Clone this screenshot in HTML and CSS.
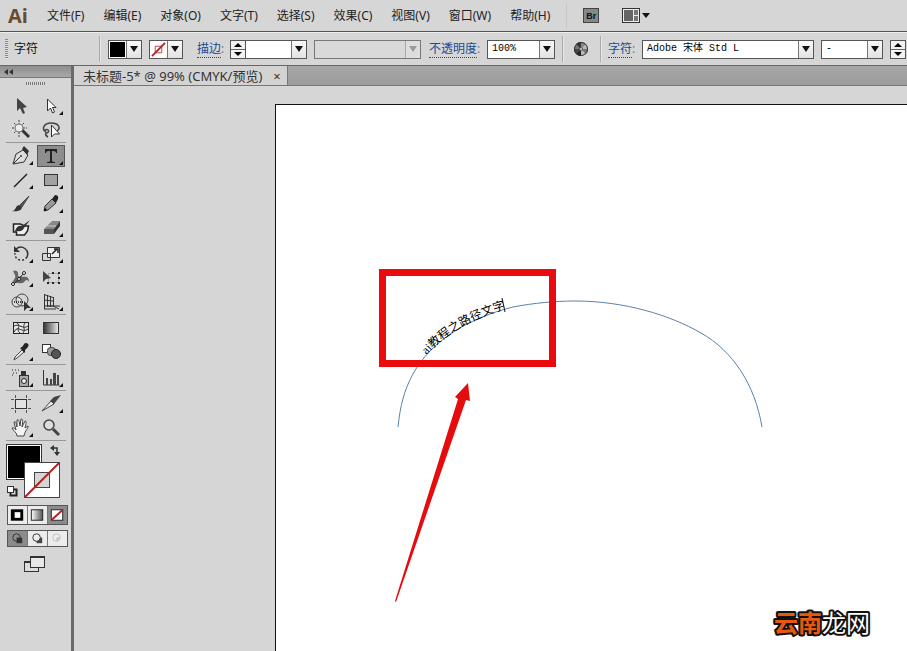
FILE: index.html
```html
<!DOCTYPE html>
<html lang="zh-CN">
<head>
<meta charset="utf-8">
<title>未标题-5</title>
<link rel="stylesheet" href="styles.css">
</head>
<body>
<header class="menubar">
  <div class="logo">Ai</div>
  <nav class="menus">
    <button>文件(F)</button><button>编辑(E)</button><button>对象(O)</button><button>文字(T)</button><button>选择(S)</button><button>效果(C)</button><button>视图(V)</button><button>窗口(W)</button><button>帮助(H)</button>
  </nav>
  <span class="menu-rule"></span>
  <button class="bridge" aria-label="Bridge">Br</button>
  <button class="arrange" aria-label="排列文档"><svg width="28" height="16" viewBox="0 0 28 16"><rect x=".5" y=".5" width="17" height="14" fill="#eee" stroke="#333"/><path d="M2 2h9v11H2z" fill="#666"/><path d="M12 2h4v5h-4zM12 8h4v5h-4z" fill="#777"/><path d="M20 5h8l-4 5z" fill="#111"/></svg></button>
</header>

<section class="controlbar">
  <span class="grip"></span>
  <span class="panel-name">字符</span>
  <span class="rule"></span>
  <button class="swatch" aria-label="填色"><span class="chip black"></span><span class="drop"><svg class="tri" viewBox="0 0 8 6"><path d="M0 0h8L4 6z"/></svg></span></button>
  <button class="swatch" aria-label="描边颜色"><span class="chip"><svg width="15" height="15" viewBox="0 0 16 16"><path d="M4.500 4.500h7v7h-7z" fill="none" stroke="#a44"/><path d="M1 15 15 1" stroke="#b32025" stroke-width="2"/></svg></span><span class="drop"><svg class="tri" viewBox="0 0 8 6"><path d="M0 0h8L4 6z"/></svg></span></button>
  <a class="panel-link stroke-link" href="#"><u>描边</u>:</a>
  <div class="weight">
    <button class="spin" aria-label="调整粗细"><svg width="8" height="14" viewBox="0 0 8 14"><path d="M0 5h8L4 1zM0 10h8l-4 4z"/></svg></button>
    <div class="combo w-weight"><select aria-label="描边粗细"><option></option></select><span class="drop"><svg class="tri" viewBox="0 0 8 6"><path d="M0 0h8L4 6z"/></svg></span></div>
  </div>
  <div class="combo w-brush off"><select aria-label="画笔定义" disabled><option></option></select><span class="drop"><svg class="tri" viewBox="0 0 8 6"><path d="M0 0h8L4 6z"/></svg></span></div>
  <a class="panel-link opacity-link" href="#"><u>不透明度</u>:</a>
  <div class="combo w-opacity"><select aria-label="不透明度"><option>100%</option></select><span class="drop"><svg class="tri" viewBox="0 0 8 6"><path d="M0 0h8L4 6z"/></svg></span></div>
  <span class="rule"></span>
  <button class="recolor" aria-label="重新着色图稿"><svg width="16" height="16" viewBox="0 0 16 16"><circle cx="8" cy="8" r="7" fill="#777"/><path d="M8 8 3 3a7 7 0 0 1 5-2z" fill="#333"/><path d="M8 8V1a7 7 0 0 1 5 2z" fill="#888"/><path d="m8 8 5-5a7 7 0 0 1 2 5z" fill="#bbb"/><path d="M8 8h7a7 7 0 0 1-2 5z" fill="#777"/><path d="m8 8 5 5a7 7 0 0 1-5 2z" fill="#bbb"/><path d="M8 8v7a7 7 0 0 1-5-2z" fill="#222"/><path d="m8 8-5 5a7 7 0 0 1-2-5z" fill="#444"/><circle cx="8" cy="8" r="6.500" fill="none" stroke="#333"/><circle cx="8" cy="8" r="1.500" fill="#ddd" stroke="#555"/></svg></button>
  <span class="rule"></span>
  <a class="panel-link char-link" href="#"><u>字符</u>:</a>
  <div class="combo w-font"><select aria-label="字体"><option>Adobe 宋体 Std L</option></select><span class="drop"><svg class="tri" viewBox="0 0 8 6"><path d="M0 0h8L4 6z"/></svg></span></div>
  <div class="combo w-style"><select aria-label="字体样式"><option>-</option></select><span class="drop"><svg class="tri" viewBox="0 0 8 6"><path d="M0 0h8L4 6z"/></svg></span></div>
  <div class="weight size">
    <button class="spin" aria-label="调整字号"><svg width="8" height="14" viewBox="0 0 8 14"><path d="M0 5h8L4 1zM0 10h8l-4 4z"/></svg></button>
  </div>
</section>

<main class="workspace">
  <aside class="toolbox">
    <button class="collapse" aria-label="折叠面板"><svg width="10" height="6" viewBox="0 0 10 6"><path d="M4 0v6L0 3zM9 0v6L5 3z" fill="#333"/></svg></button>
    <div class="handle"><span></span></div>

    <div class="tools">
      <button aria-label="选择"><svg viewBox="0 0 30 24"><path d="M11 4v13l3-3 3 6 2-1-2-5 4-1z" fill="#444"/></svg></button>
      <button class="more" aria-label="直接选择"><svg viewBox="0 0 30 24"><path d="M11.500 5v12l3-3 2 5 2-1-2-4.500h3.500z" fill="#fff" stroke="#333"/></svg></button>
      <button aria-label="魔棒"><svg viewBox="0 0 30 24"><path d="m16 12 7 7" stroke="#333" stroke-width="3"/><circle cx="13" cy="10" r="4" fill="#eee" stroke="#777"/><g stroke="#444" stroke-dasharray="2 1"><path d="M13 2v4M13 14v5M6 10h3M17 10h4M8 5l2 2M18 5l-2 2M8 15l2-2"/></g></svg></button>
      <button aria-label="套索"><svg viewBox="0 0 30 24"><path d="M10 14c-5-3-2-9 5-9 8 0 10 5 6 8M9 12c4-2 5 3 1 3-1 2 0 3 2 4" fill="none" stroke="#444" stroke-width="1.500"/><path d="M15.500 7v12l3-3h5z" fill="#fff" stroke="#333"/></svg></button>
    </div>
    <div class="tools">
      <button class="more" aria-label="钢笔"><svg viewBox="0 0 30 24"><path d="m7 20 3-10 7-4 5 5-4 7z" fill="#ddd" stroke="#333"/><path d="m16 5 2-3 5 5-2 4z" fill="#333"/><path d="m7 20 7-7" stroke="#333"/><circle cx="15" cy="12" r="1" fill="#333"/></svg></button>
      <button class="more active" aria-label="文字"><svg viewBox="0 0 30 24"><path d="M9 5h12v4h-1q0-2-3-2h-1v10q0 1 3 1v1h-8v-1q3 0 3-1V7h-1q-3 0-3 2H9z" fill="#222"/></svg></button>
      <button class="more" aria-label="直线段"><svg viewBox="0 0 30 24"><path d="M8 19 21 6" stroke="#222" stroke-width="1.500"/></svg></button>
      <button class="more" aria-label="矩形"><svg viewBox="0 0 30 24"><rect x="8.500" y="6.500" width="13" height="11" fill="#a2a2a2" stroke="#333"/></svg></button>
      <button aria-label="画笔"><svg viewBox="0 0 30 24"><path d="m14 13 9-9-7 11z" fill="#555" stroke="#444"/><path d="M6 19c4 0 3-5 7-6l3 2c0 4-6 5-10 4z" fill="#333"/></svg></button>
      <button class="more" aria-label="铅笔"><svg viewBox="0 0 30 24"><path d="m8 19 1-5 7-7 4 4-8 7z" fill="#999" stroke="#333"/><path d="m16 7 3-4q4 0 3 4l-2 4z" fill="#222"/><path d="m8 19 1-3 2 2z"/></svg></button>
      <button aria-label="斑点画笔"><svg viewBox="0 0 30 24"><path d="M7.500 8h7l4 2 4 0-1 5-3 4h-8v-3h-3z" fill="#eee" stroke="#222" stroke-width="1.500"/><path d="M11 15q-1 1-2 0 2-6 7-5l8-6-6 8q-2 4-7 3z" fill="#333"/></svg></button>
      <button class="more" aria-label="橡皮擦"><svg viewBox="0 0 30 24"><path d="m8 13 8-8 8 0-6 8z" fill="#888"/><path d="M8 13h10v5H8z" fill="#555"/><path d="m18 13 6-8v5l-6 8z" fill="#333"/><path d="m11 10 9 0" stroke="#ccc"/></svg></button>
    </div>
    <div class="tools">
      <button class="more" aria-label="旋转"><svg viewBox="0 0 30 24"><path d="M10 7c6-5 14 1 11 8" fill="none" stroke="#333" stroke-width="1.500"/><path d="M8 4v6h6z" fill="#333"/><path d="M21 15c-4 6-13 3-12-4" fill="none" stroke="#333" stroke-width="1.500" stroke-dasharray="2 2"/></svg></button>
      <button class="more" aria-label="比例缩放"><svg viewBox="0 0 30 24"><path d="M11.500 5.500h12v10h-12z" fill="#eee" stroke="#333"/><path d="M6.500 11.500h8v7h-8z" fill="none" stroke="#333"/><path d="m16 12 5-5M18 7h4v4" fill="none" stroke="#222" stroke-width="1.500"/></svg></button>
      <button class="more" aria-label="宽度"><svg viewBox="0 0 30 24"><path d="M7 5c4-2 6 2 5 5 6 2 11-2 11 6-2-3-3-2-5 0-3 3-8 0-12 1 2-4 4-5 3-8z" fill="#666"/><path d="m8 18 10-11" stroke="#222"/><circle cx="7" cy="18" r="1.500" fill="#fff" stroke="#222"/><circle cx="18" cy="7" r="1.500" fill="#fff" stroke="#222"/><circle cx="13" cy="13" r="1.500" fill="#fff" stroke="#222"/></svg></button>
      <button aria-label="自由变换"><svg viewBox="0 0 30 24"><path d="M12.500 7.500h10v9h-10z" fill="none" stroke="#777" stroke-dasharray="1 1"/><path d="M11 16h2v2h-2zM16 16h2v2h-2zM22 16h2v2h-2zM22 11h2v2h-2zM22 6h2v2h-2zM16 6h2v2h-2z" fill="#222"/><path d="M7 5v11l3-3 5-1z" fill="#444"/></svg></button>
      <button class="more" aria-label="形状生成器"><svg viewBox="0 0 30 24"><circle cx="11" cy="12" r="5" fill="#ddd" stroke="#444"/><circle cx="16" cy="10" r="6" fill="none" stroke="#444"/><path d="M8 12h10" stroke="#111" stroke-width="1.500" stroke-dasharray="1 1"/><path d="M18 11v10l3-3h4z" fill="#333"/></svg></button>
      <button class="more" aria-label="透视网格"><svg viewBox="0 0 30 24"><path d="M8.500 4v15M8 4.500l9 3M11.500 5v12M14.500 6v11M17.500 7v9M8 10l9 1M8 16h9l6 3M8 19h12M12 16l12 0" fill="none" stroke="#333"/></svg></button>
    </div>
    <div class="tools">
      <button aria-label="网格"><svg viewBox="0 0 30 24"><rect x="7.500" y="6.500" width="15" height="11" fill="#e5e5e5" stroke="#222"/><path d="M8 10c5-3 9 4 14 0M8 16c4-8 8 2 14-3M11 7c5 3-2 6 3 10M19 7c-3 4 1 6-2 10" fill="none" stroke="#333"/></svg></button>
      <button aria-label="渐变"><svg viewBox="0 0 30 24"><defs><linearGradient id="g1"><stop stop-color="#333"/><stop offset="1" stop-color="#eee"/></linearGradient></defs><rect x="7.500" y="6.500" width="15" height="11" fill="url(#g1)" stroke="#333"/></svg></button>
      <button class="more" aria-label="吸管"><svg viewBox="0 0 30 24"><path d="m8 20 1-3 7-7 2 2-7 6z" fill="#eee" stroke="#444"/><path d="m14 8 2-1 3-4q5 0 3 4l-3 3v3z" fill="#222"/></svg></button>
      <button aria-label="混合"><svg viewBox="0 0 30 24"><rect x="6.500" y="4.500" width="8" height="8" fill="#fff" stroke="#333"/><rect x="11.500" y="7.500" width="8" height="8" rx="3" fill="#999" stroke="#444"/><circle cx="20" cy="14" r="4.500" fill="#555" stroke="#222"/></svg></button>
    </div>
    <div class="tools">
      <button class="more" aria-label="符号喷枪"><svg viewBox="0 0 30 24"><path d="M6 4h8M7 7h6M6 9h3" stroke="#222" stroke-dasharray="1 2"/><rect x="13.500" y="9.500" width="9" height="11" fill="#aaa" stroke="#333"/><path d="M15 5h5v4h-5z" fill="#333"/><circle cx="18" cy="15" r="2.500" fill="#eee" stroke="#222"/></svg></button>
      <button class="more" aria-label="柱形图"><svg viewBox="0 0 30 24"><path d="M7.500 4v15h16" fill="none" stroke="#333"/><path d="M10 12h2v7h-2zM14 13h2v6h-2zM17 7h3v12h-3zM21 9h2v10h-2z" fill="#444"/></svg></button>
    </div>
    <div class="tools">
      <button aria-label="画板"><svg viewBox="0 0 30 24"><rect x="9.500" y="7.500" width="11" height="9" fill="#e2e2e2" stroke="#333"/><path d="M9.500 3v3M20.500 3v3M9.500 18v3M20.500 18v3M5 7.500h3M22 7.500h3M5 16.500h3M22 16.500h3" stroke="#555"/></svg></button>
      <button class="more" aria-label="切片"><svg viewBox="0 0 30 24"><path d="m6 19 9-10 3 3z" fill="#eee" stroke="#444"/><path d="m14 9 4-4 7-2-7 9z" fill="#444"/></svg></button>
      <button class="more" aria-label="抓手"><svg viewBox="0 0 30 24"><path d="M11 20c0-4-4-5-5-8 2-1 3 1 4 2L8 6c2-1 2 1 3 5V4c2-1 2 1 3 6l1-7c2 0 2 1 1 8l3-6c2 0 1 2 0 7l3-2c1 2-3 4-4 10z" fill="#f4f4f4" stroke="#444"/></svg></button>
      <button aria-label="缩放"><svg viewBox="0 0 30 24"><circle cx="13" cy="9" r="5" fill="#ddd" stroke="#444" stroke-width="1.500"/><path d="m17 13 6 6" stroke="#444" stroke-width="3"/></svg></button>
    </div>

    <svg class="fillstroke" width="60" height="58" viewBox="0 0 60 58"><rect x=".5" y="2.500" width="35" height="35" fill="#fff" stroke="#333"/><path d="M2 4h32v32H2z"/><rect x="18.500" y="20.500" width="35" height="35" fill="#fff" stroke="#444"/><rect x="28.500" y="30.500" width="15" height="15" fill="#d6d6d6" stroke="#444"/><path d="M19 55 53 21" stroke="#b32025" stroke-width="2"/><path d="M46 6h5v6" fill="none" stroke="#333" stroke-width="1.500"/><path d="m44 6 4-3v6zM48 10h6l-3 4z" fill="#333"/><rect x="4.500" y="47.500" width="6" height="6" fill="#d6d6d6" stroke="#222" stroke-width="2"/><rect x="1.500" y="44.500" width="6" height="6" fill="#fff" stroke="#333"/></svg>

    <div class="modes">
      <button aria-label="颜色"><svg viewBox="0 0 20 18"><path d="M3 3h13v12H3z" fill="#000"/><path d="M7 6h6v6H7z" fill="#fff"/></svg></button>
      <button aria-label="渐变填充"><svg viewBox="0 0 20 18"><defs><linearGradient id="g2"><stop stop-color="#fff"/><stop offset="1" stop-color="#555"/></linearGradient></defs><rect x="3.500" y="3.500" width="12" height="11" fill="url(#g2)" stroke="#222"/></svg></button>
      <button class="on" aria-label="无"><svg viewBox="0 0 20 18"><rect x="3.500" y="3.500" width="12" height="11" fill="#fff" stroke="#222"/><path d="M4 14 15 4" stroke="#b32025" stroke-width="2"/></svg></button>
    </div>
    <div class="modes draw">
      <button class="on" aria-label="正常绘图"><svg viewBox="0 0 20 16"><circle cx="9" cy="7" r="4" fill="none" stroke="#333"/><path d="M9 7h6v6H9z" fill="#333"/></svg></button>
      <button aria-label="背面绘图"><svg viewBox="0 0 20 16"><path d="M9 7h6v6H9z" fill="#444"/><circle cx="9" cy="7" r="4" fill="#eee" stroke="#333"/></svg></button>
      <button aria-label="内部绘图" disabled><svg viewBox="0 0 20 16"><circle cx="9" cy="7" r="4" fill="#eee" stroke="#bbb"/><path d="M9 7h4l-4 4z" fill="#bbb"/></svg></button>
    </div>
    <button class="screen" aria-label="更改屏幕模式"><svg width="22" height="18" viewBox="0 0 22 18"><rect x=".5" y="5.500" width="14" height="10" fill="#ddd" stroke="#333"/><path d="M0 5h15v2H0z" fill="#333"/><rect x="6.500" y=".5" width="14" height="11" fill="#e8e8e8" stroke="#333"/><path d="M6 0h15v2H6z" fill="#333"/></svg></button>
  </aside>

  <section class="document">
    <div class="tabs"><div class="tab"><span>未标题-5* @ 99% (CMYK/预览)</span><button aria-label="关闭">×</button></div></div>
    <div class="canvas">
      <div class="artboard">
        <svg class="art" width="631" height="546" viewBox="276 105 631 546">
          <path id="arc" d="M398 427C400 407 404 390 413 374C432 339 472 317 513 307C534 303 555 301 575 301C624 301 670 315 701 333C733 351 755 385 762 427" fill="none" stroke="#5b82ab"/>
          <text class="pathtext"><textPath href="#arc" startOffset="79">ai教程之路径文字</textPath></text>
          <path d="m502 298 3 14" stroke="#111"/>
          <rect x="382.500" y="272.500" width="170" height="91" fill="none" stroke="#e90b0d" stroke-width="7"/>
          <path d="m395 601 63-202-3-2 13-14 2 18-4-1-70 202z" fill="#e60b0d"/>
          <text class="mark" x="774" y="632"><tspan class="hot">云南</tspan><tspan>龙网</tspan></text>
        </svg>
      </div>
    </div>
  </section>
</main>
</body>
</html>
```

FILE: styles.css
```css
* { box-sizing: border-box; }
body {
  margin: 0;
  height: 100vh;
  display: flex;
  flex-direction: column;
  overflow: hidden;
  background: #d6d6d6;
  color: #222;
  font: 12px/16px "Noto Sans", "Noto Sans CJK SC", sans-serif;
}
button {
  margin: 0;
  padding: 0;
  border: 0;
  background: none;
  color: inherit;
  font: inherit;
}
svg { display: block; flex: none; }

.menubar {
  display: flex;
  align-items: center;
  flex: none;
  height: 32px;
  padding-left: 8px;
  border-bottom: 1px solid #555;
  white-space: nowrap;
}
.logo {
  width: 39px;
  color: #6b4a2f;
  font: bold 20px/24px "Open Sans", sans-serif;
}
.menus { display: flex; gap: 19px; }
.menu-rule { width: 1px; height: 24px; margin: 0 16px; background: #c6c6c6; }
.bridge {
  width: 16px;
  height: 15px;
  border: 1px solid #444;
  background: #888;
  color: #111;
  font: bold 9px/12px "Liberation Sans", sans-serif;
}
.arrange { margin-left: 23px; }

.controlbar {
  display: flex;
  align-items: center;
  flex: none;
  height: 34px;
  padding-left: 5px;
  border-top: 1px solid #eee;
  border-bottom: 1px solid #666;
  white-space: nowrap;
}
.controlbar > * { flex: none; }
.grip {
  width: 3px;
  height: 20px;
  background: repeating-linear-gradient(#888 0 1px, #e0e0e0 1px 2px);
}
.panel-name { width: 91px; padding-left: 6px; color: #111; }
.rule { width: 2px; height: 26px; border-left: 1px solid #aaa; border-right: 1px solid #e6e6e6; }
.swatch {
  display: flex;
  width: 34px;
  height: 19px;
  margin-left: 7px;
  border: 1px solid #555;
  background: #fff;
}
.chip { width: 17px; height: 17px; border: 1px solid #fff; }
.black { background: #000; }
.drop {
  display: flex;
  align-items: center;
  justify-content: center;
  width: 15px;
  height: 17px;
  border-left: 1px solid #777;
  background: linear-gradient(#fafafa, #e2e2e2);
  pointer-events: none;
}
.tri { width: 8px; height: 6px; fill: #111; }
.panel-link { color: #777; text-decoration: none; }
.panel-link u { color: #1c4a94; text-decoration: none; border-bottom: 1px dotted #1c4a94; }
.stroke-link { width: 33px; margin-left: 14px; }
.opacity-link { width: 58px; margin-left: 8px; }
.char-link { width: 34px; margin-left: 6px; }
.weight { display: flex; }
.spin {
  display: flex;
  align-items: center;
  justify-content: center;
  width: 16px;
  height: 19px;
  border: 1px solid #555;
  background: linear-gradient(#f2f2f2 48%, #666 48% 54%, #f2f2f2 54%);
}
.combo { position: relative; height: 19px; }
.combo select {
  display: block;
  width: 100%;
  height: 19px;
  margin: 0;
  padding: 0 18px 0 4px;
  border: 1px solid #555;
  border-radius: 0;
  background: #fff;
  color: #000;
  opacity: 1;
  appearance: none;
  font: 10px/16px "Liberation Mono", "Noto Sans CJK SC", monospace;
}
.combo .drop { position: absolute; top: 1px; right: 1px; }
.off select { background: #d9d9d9; border-color: #777; }
.off .drop { background: #dedede; border-color: #aaa; }
.off .tri { fill: #999; }
.w-weight { width: 61px; }
.weight .combo select { border-left: 0; }
.w-brush { width: 107px; margin-left: 7px; }
.w-opacity { width: 68px; margin-right: 7px; }
.recolor { margin: 0 11px 0 9px; }
.w-font { width: 172px; }
.w-style { width: 62px; margin: 0 7px; }

.workspace { display: flex; flex: 1; min-height: 0; }
.toolbox {
  flex: none;
  width: 74px;
  border-right: 3px solid #6a6a6a;
}
.collapse {
  display: flex;
  align-items: center;
  width: 100%;
  height: 12px;
  padding-left: 4px;
  border-bottom: 1px solid #777;
  background: linear-gradient(#8e8e8e, #a8a8a8);
}
.handle { height: 16px; padding: 4px 0 0 26px; }
.handle span {
  display: block;
  width: 19px;
  height: 3px;
  background: repeating-linear-gradient(90deg, #777 0 1px, #ddd 1px 2px);
}
.tools {
  display: grid;
  grid-template-columns: 30px 30px;
  margin: 0 5px 1px 6px;
  border-bottom: 1px solid #999;
}
.tools button { position: relative; height: 24px; }
.tools svg { width: 30px; height: 24px; }
.more::after {
  content: "";
  position: absolute;
  right: 3px;
  bottom: 3px;
  border-left: 4px solid transparent;
  border-bottom: 4px solid #111;
}
.active { background: #8e8e8e; box-shadow: inset 0 0 0 1px #d6d6d6, inset 0 0 0 2px #555; }
.fillstroke { margin-left: 6px; }
.modes {
  display: flex;
  width: 61px;
  height: 20px;
  margin: 5px 0 0 7px;
  border: 1px solid #555;
}
.modes button { flex: 1; border-right: 1px solid #777; background: #ececec; }
.modes button:last-child { border-right: 0; }
.modes .on { background: #8c8c8c; }
.modes svg { width: 100%; height: 100%; }
.draw { height: 17px; }
.screen { margin: 9px 0 0 24px; }

.document { display: flex; flex: 1; flex-direction: column; min-width: 0; }
.tabs {
  display: flex;
  flex: none;
  height: 20px;
  border-bottom: 1px solid #777;
  background: linear-gradient(#a6a6a6, #9c9c9c);
}
.tab {
  display: flex;
  align-items: center;
  justify-content: space-between;
  width: 214px;
  padding: 0 4px 0 9px;
  border-right: 1px solid #777;
  background: #d3d3d3;
  color: #333;
  font-size: 13px;
  white-space: nowrap;
}
.tab button { width: 12px; line-height: 16px; }
.canvas { display: flex; flex: 1; min-height: 0; padding: 18px 0 0 201px; }
.artboard {
  flex: 1;
  min-width: 0;
  border-top: 1px solid #111;
  border-left: 1px solid #111;
  background: #fff;
  overflow: hidden;
}
.pathtext { fill: #000; font: 12px "Liberation Serif", "Noto Sans CJK SC", serif; }
.mark {
  fill: #fff;
  stroke: #111;
  stroke-width: 4px;
  stroke-linejoin: round;
  paint-order: stroke;
  font: 24px "Noto Sans CJK SC", sans-serif;
}
.hot { fill: #e9580f; font-weight: bold; }
```
